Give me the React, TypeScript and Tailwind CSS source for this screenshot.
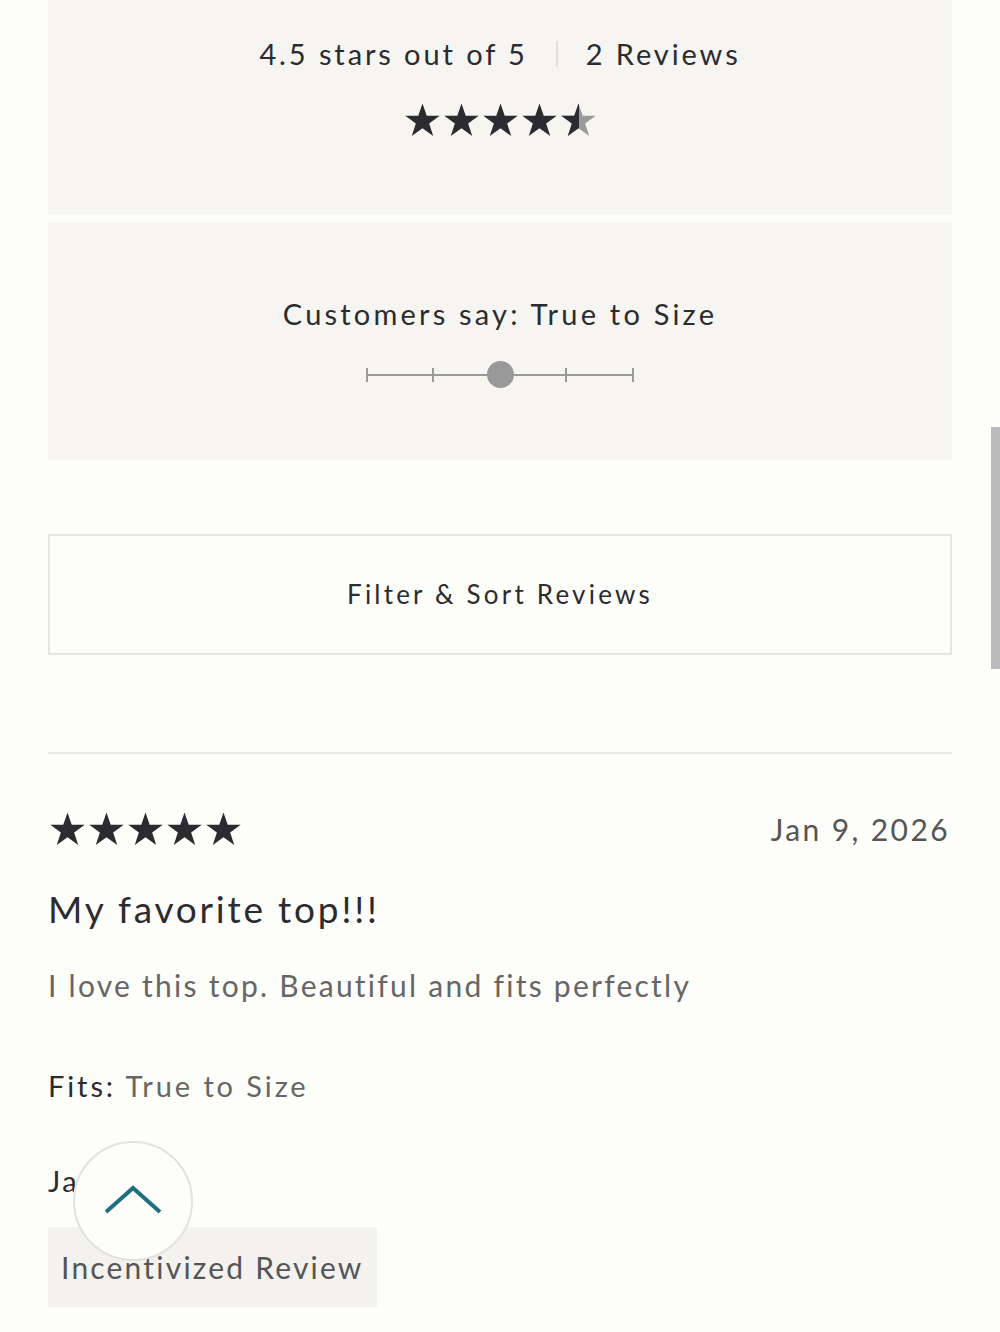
import React from "react";

const Star = ({ size, fill = "#2b2b30", half = false }: { size: number; fill?: string; half?: boolean }) => {
  const d = "M12 1.5l2.6 7.6h8l-6.5 4.8 2.5 7.7L12 16.8l-6.6 4.8 2.5-7.7L1.4 9.1h8z";
  return (
    <svg width={size} height={size} viewBox="0 0 24 24">
      {half ? (
        <>
          <defs>
            <clipPath id="lh">
              <rect x="0" y="0" width="12.3" height="24" />
            </clipPath>
          </defs>
          <path d={d} fill="#9a9a9a" />
          <path d={d} fill={fill} clipPath="url(#lh)" />
        </>
      ) : (
        <path d={d} fill={fill} />
      )}
    </svg>
  );
};

export default function App() {
  return (
    <div
      className="relative w-[1000px] h-[1332px] overflow-hidden bg-[#fdfdf9] text-[#2b2b30]"
      style={{ fontFamily: "Lato, 'Open Sans', sans-serif" }}
    >
      <div className="px-[48px] flex flex-col">
        <div className="h-[214px] bg-[#f6f5f2] flex flex-col items-center pt-[34px]">
          <div className="flex items-center text-[29px] tracking-[2.9px] leading-[40px]">
            <span>4.5 stars out of 5</span>
            <span className="mx-[28px] w-[2px] h-[26px] bg-[#dededb]" />
            <span>2 Reviews</span>
          </div>
          <div className="flex mt-[27px]">
            <Star size={39} />
            <Star size={39} />
            <Star size={39} />
            <Star size={39} />
            <Star size={39} half />
          </div>
        </div>
        <div className="mt-[8px] h-[238px] bg-[#f6f5f2] flex flex-col items-center pt-[72px]">
          <div className="text-[29px] tracking-[3.2px] leading-[40px]">Customers say: True to Size</div>
          <div className="relative mt-[27px] w-[268px] h-[28px]">
            <div className="absolute left-0 right-0 top-[13px] h-[2px] bg-[#9a9a9a]" />
            {[0, 66, 133, 199, 266].map((x) => (
              <div key={x} className="absolute top-[7px] w-[2px] h-[14px] bg-[#9a9a9a]" style={{ left: x }} />
            ))}
            <div className="absolute left-[121px] top-0 w-[27px] h-[27px] rounded-full bg-[#999999]" />
          </div>
        </div>
        <div className="mt-[74px] h-[121px] border-2 border-[#e6e6e3] flex items-center justify-center text-[26px] tracking-[3.2px]">
          Filter &amp; Sort Reviews
        </div>
        <div className="mt-[97px] h-[2px] bg-[#e8e8e5]" />
        <div className="mt-[53px] flex items-center justify-between">
          <div className="flex">
            <Star size={39} />
            <Star size={39} />
            <Star size={39} />
            <Star size={39} />
            <Star size={39} />
          </div>
          <div className="text-[30px] tracking-[2.4px] text-[#555555] pr-[2px]">Jan 9, 2026</div>
        </div>
        <div className="mt-[32px] text-[37px] tracking-[2.8px] leading-[50px]">My favorite top!!!</div>
        <div className="mt-[31px] text-[30px] tracking-[2.25px] leading-[40px] text-[#666666]">
          I love this top. Beautiful and fits perfectly
        </div>
        <div className="mt-[61px] text-[29px] tracking-[2.9px] leading-[40px]">
          <span className="text-[#2b2b30]">Fits:</span> <span className="text-[#666666]">True to Size</span>
        </div>
        <div className="mt-[55px] text-[29px] tracking-[2.5px] leading-[40px]">Jane</div>
        <div className="mt-[26px] self-start h-[80px] px-[13px] bg-[#f3f2ef] flex items-center text-[30px] tracking-[2.2px] text-[#555555]">
          Incentivized Review
        </div>
      </div>
      <button className="absolute left-[73px] top-[1141px] w-[120px] h-[120px] rounded-full bg-[#fdfdf9] border-2 border-[#e2e2df] flex items-center justify-center">
        <svg width="60" height="34" viewBox="0 0 60 34">
          <path d="M3 28L30 4l27 24" fill="none" stroke="#1f6f80" strokeWidth="4" />
        </svg>
      </button>
      <div className="absolute right-0 top-[427px] w-[9px] h-[242px] bg-[#bbbbbb]" />
    </div>
  );
}
